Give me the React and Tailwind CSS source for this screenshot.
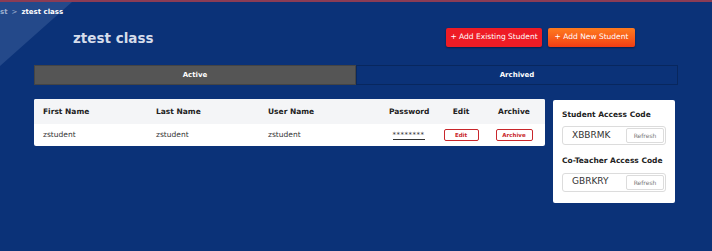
import React from "react";

const rows = [
  { first: "zstudent", last: "zstudent", user: "zstudent", password: "********" },
];

const cols = "grid grid-cols-[113px_112px_121px_39px_66px_40px_1fr] items-center pl-[9px]";

const AccessCode = ({ label, code }) => (
  <div>
    <div className="text-[7.5px] font-bold text-[#222] whitespace-nowrap">{label}</div>
    <div className="mt-[6px] flex items-center h-[19px] border border-[#dcdcdc] rounded-[3px] bg-white">
      <span className="flex-1 pl-[9px] text-[9px] text-[#333]">{code}</span>
      <button className="mr-[1px] h-[15px] w-[38px] border border-[#dcdcdc] rounded-[2px] text-[6px] text-[#777] bg-white">
        Refresh
      </button>
    </div>
  </div>
);

const App = () => {
  return (
    <div
      className="relative w-[712px] h-[251px] overflow-hidden bg-[#0b3278] border-t-[2px] border-[#8b3c55]"
      style={{ fontFamily: '"DejaVu Sans", Verdana, sans-serif' }}
    >
      <svg className="absolute left-0 top-0" width="80" height="70">
        <polygon points="0,0 72,0 0,64" fill="#24498a" />
      </svg>

      <div className="relative">
        <div className="h-[18px] flex items-center text-[7px] font-bold pt-[2px]">
          <span className="text-[#9fb0d0]">st</span>
          <span className="text-[#9fb0d0] mx-[4px] font-normal">&gt;</span>
          <span className="text-white">ztest class</span>
        </div>

        <div className="flex items-center h-[37px] pl-[73px] pr-[77px]">
          <h1 className="flex-1 text-[13.5px] font-bold text-[#d5dcea]">ztest class</h1>
          <button className="-mt-[3px] h-[19px] w-[96px] rounded-[2px] bg-[#ee1c25] text-white text-[7.5px] shadow-[0_1px_2px_rgba(0,0,0,0.4)]">
            + Add Existing Student
          </button>
          <button className="-mt-[3px] ml-[6px] h-[19px] w-[87px] rounded-[2px] bg-gradient-to-b from-[#ff7a1f] to-[#f03c14] text-white text-[7.5px] shadow-[0_1px_2px_rgba(0,0,0,0.4)]">
            + Add New Student
          </button>
        </div>

        <div className="mx-[34px] mt-[8px] flex h-[20px] text-[7px] font-bold text-white">
          <div className="flex-1 flex items-center justify-center bg-[#555555] border border-[#444]">Active</div>
          <div className="flex-1 flex items-center justify-center border border-[#08275e] bg-[#0b3278]">Archived</div>
        </div>

        <div className="flex items-start mx-[34px] mt-[14px] gap-[8px]">
          <div className="w-[511px] bg-white rounded-[2px] overflow-hidden">
            <div className={`${cols} h-[25px] bg-[#f4f5f7] text-[7.5px] font-bold text-[#222]`}>
              <span>First Name</span>
              <span>Last Name</span>
              <span>User Name</span>
              <span className="text-center">Password</span>
              <span className="text-center">Edit</span>
              <span className="text-center">Archive</span>
            </div>
            {rows.map((r) => (
              <div key={r.user} className={`${cols} h-[22px] text-[7.5px] text-[#333]`}>
                <span>{r.first}</span>
                <span>{r.last}</span>
                <span>{r.user}</span>
                <span className="text-center">
                  <span className="border-b border-[#333] text-[7px] tracking-[0.5px]">{r.password}</span>
                </span>
                <span className="flex justify-center">
                  <button className="w-[35px] h-[12px] border border-[#c8262b] rounded-[2px] text-[5.5px] font-bold text-[#c8262b]">
                    Edit
                  </button>
                </span>
                <span className="flex justify-center">
                  <button className="w-[37px] h-[12px] border border-[#c8262b] rounded-[2px] text-[5.5px] font-bold text-[#c8262b]">
                    Archive
                  </button>
                </span>
              </div>
            ))}
          </div>

          <div className="w-[122px] mt-[1px] bg-white rounded-[2px] px-[9px] pt-[9px] pb-[11px] flex flex-col gap-[10px]">
            <AccessCode label="Student Access Code" code="XBBRMK" />
            <AccessCode label="Co-Teacher Access Code" code="GBRKRY" />
          </div>
        </div>
      </div>
    </div>
  );
};

export default App;
